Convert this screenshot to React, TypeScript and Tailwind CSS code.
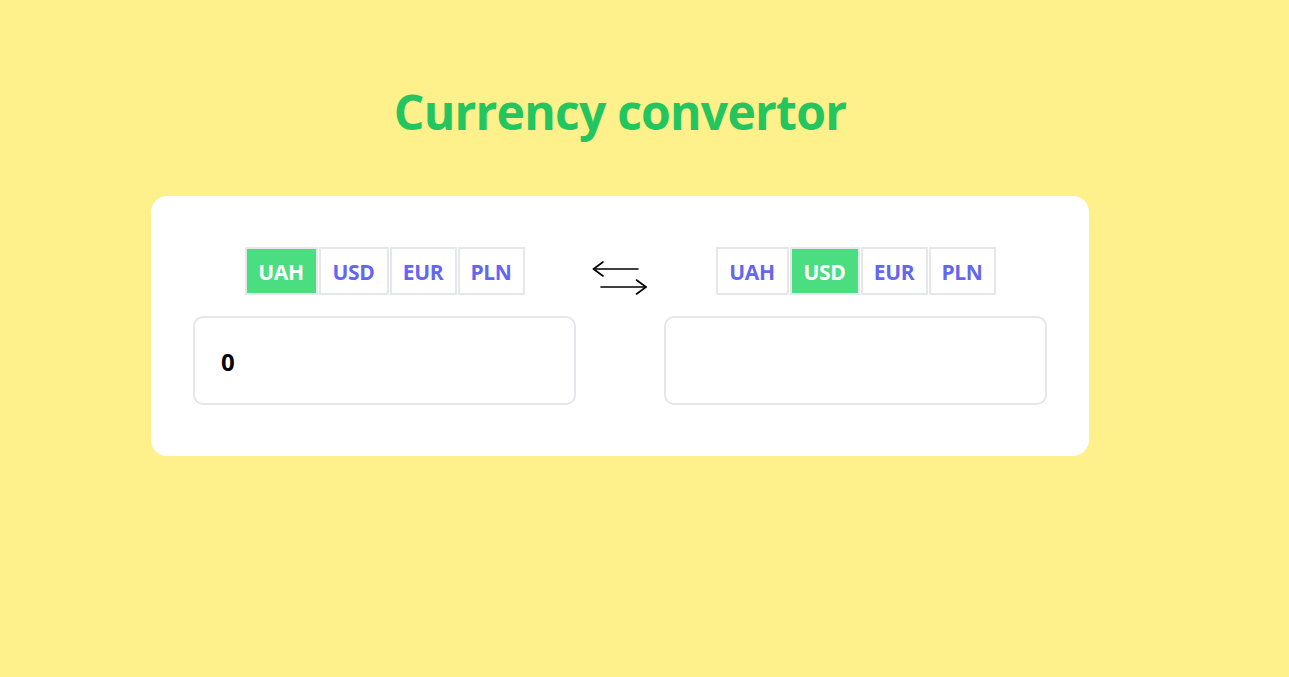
import React from "react";

const CURRENCIES: { c: string; w: string }[] = [
  { c: "UAH", w: "w-[73px]" },
  { c: "USD", w: "w-[70px]" },
  { c: "EUR", w: "w-[67px]" },
  { c: "PLN", w: "w-[67px]" },
];

function Block({ active, value }: { active: string; value: string }) {
  return (
    <div className="flex w-[383px] flex-col items-center">
      <div className="flex gap-[1px]">
        {CURRENCIES.map(({ c, w }) => (
          <button
            key={c}
            className={
              "h-[48px] border-2 border-[#e5e7eb] pt-[3px] text-center text-[21px] font-bold tracking-[-0.3px] " +
              w +
              " " +
              (c === active ? "bg-[#4ade80] text-white" : "bg-white text-[#6366f1]")
            }
          >
            {c}
          </button>
        ))}
      </div>
      <div className="mt-[21px] flex h-[89px] w-full items-center rounded-[10px] border-2 border-[#e5e7eb] bg-white pt-[2px] pl-[26px] text-[24px] font-bold text-black">
        {value}
      </div>
    </div>
  );
}

export default function App() {
  return (
    <div
      className="min-h-[677px] w-full bg-[#fef08a]"
      style={{ fontFamily: '"Open Sans", "Noto Sans", sans-serif' }}
    >
      <div className="ml-[151px] w-[938px] pt-[80px]">
        <h1 className="text-center text-[48px] leading-[64px] font-bold tracking-[-0.75px] text-[#22c55e]">
          Currency convertor
        </h1>
        <div className="mt-[52px] flex h-[260px] rounded-[16px] bg-white px-[42px] pt-[51px]">
          <Block active="UAH" value="0" />
          <div className="flex w-[88px] justify-center pt-[13px]">
            <svg width="56" height="36" viewBox="0 0 56 36" fill="none" stroke="#000" strokeWidth="1.6" strokeLinecap="round" strokeLinejoin="round">
              <path d="M1.5 9 H46" />
              <path d="M11 2 L1.5 9 L11 16" />
              <path d="M9 27 H54" />
              <path d="M44.5 20 L54 27 L44.5 34" />
            </svg>
          </div>
          <Block active="USD" value="" />
        </div>
      </div>
    </div>
  );
}
